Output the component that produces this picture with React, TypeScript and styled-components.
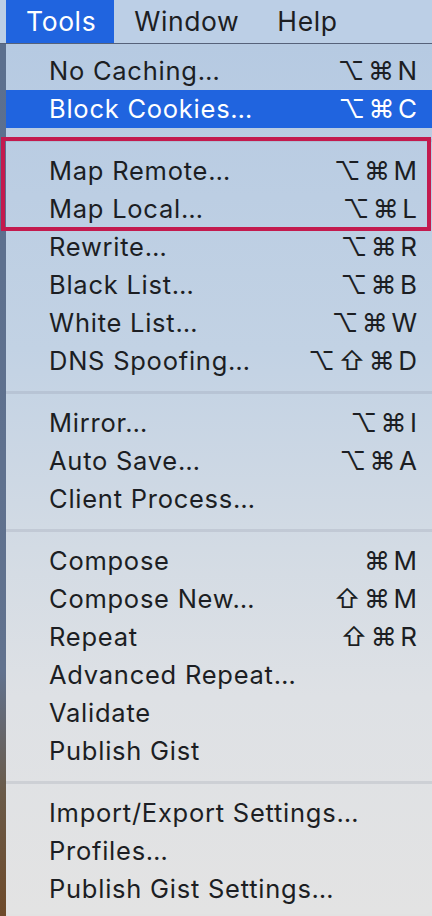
import React from 'react';
import styled, { createGlobalStyle } from 'styled-components';

type Entry =
  | { kind: 'item'; label: string; keys?: string; active?: boolean }
  | { kind: 'sep' }
  | { kind: 'group'; items: { label: string; keys?: string }[] };

const entries: Entry[] = [
  { kind: 'item', label: 'No Caching…', keys: '⌥⌘N' },
  { kind: 'item', label: 'Block Cookies…', keys: '⌥⌘C', active: true },
  { kind: 'sep' },
  {
    kind: 'group',
    items: [
      { label: 'Map Remote…', keys: '⌥⌘M' },
      { label: 'Map Local…', keys: '⌥⌘L' },
    ],
  },
  { kind: 'item', label: 'Rewrite…', keys: '⌥⌘R' },
  { kind: 'item', label: 'Black List…', keys: '⌥⌘B' },
  { kind: 'item', label: 'White List…', keys: '⌥⌘W' },
  { kind: 'item', label: 'DNS Spoofing…', keys: '⌥⇧⌘D' },
  { kind: 'sep' },
  { kind: 'item', label: 'Mirror…', keys: '⌥⌘I' },
  { kind: 'item', label: 'Auto Save…', keys: '⌥⌘A' },
  { kind: 'item', label: 'Client Process…' },
  { kind: 'sep' },
  { kind: 'item', label: 'Compose', keys: '⌘M' },
  { kind: 'item', label: 'Compose New…', keys: '⇧⌘M' },
  { kind: 'item', label: 'Repeat', keys: '⇧⌘R' },
  { kind: 'item', label: 'Advanced Repeat…' },
  { kind: 'item', label: 'Validate' },
  { kind: 'item', label: 'Publish Gist' },
  { kind: 'sep' },
  { kind: 'item', label: 'Import/Export Settings…' },
  { kind: 'item', label: 'Profiles…' },
  { kind: 'item', label: 'Publish Gist Settings…' },
];

const App: React.FC = () => {
  return (
    <>
      <GlobalStyle />
      <Screen>
        <MenuBar>
          <BarItem open>Tools</BarItem>
          <BarItem>Window</BarItem>
          <BarItem>Help</BarItem>
        </MenuBar>

        <Body>
          <Desktop />
          <Menu>
            {entries.map((entry, i) => {
              if (entry.kind === 'sep') {
                return <Separator key={i} />;
              }
              if (entry.kind === 'group') {
                return (
                  <Marked key={i}>
                    {entry.items.map((item) => (
                      <Row key={item.label}>
                        <Label>{item.label}</Label>
                        {item.keys && <Keys>{item.keys}</Keys>}
                      </Row>
                    ))}
                  </Marked>
                );
              }
              return (
                <Row key={i} active={entry.active}>
                  <Label>{entry.label}</Label>
                  {entry.keys && <Keys>{entry.keys}</Keys>}
                </Row>
              );
            })}
          </Menu>
        </Body>
      </Screen>
    </>
  );
};

export default App;

const GlobalStyle = createGlobalStyle`
  html, body {
    margin: 0;
    padding: 0;
    background: #e2e2e2;
  }
  * {
    box-sizing: border-box;
  }
`;

const Screen = styled.div`
  width: 432px;
  height: 916px;
  overflow: hidden;
  display: flex;
  flex-direction: column;
  font-family: Inter, 'DejaVu Sans', sans-serif;
  color: #1c1e23;
  background: #e2e2e2;
`;

const MenuBar = styled.div`
  height: 44px;
  flex-shrink: 0;
  display: flex;
  align-items: stretch;
  padding-left: 6px;
  background: #bccfe6;
  border-bottom: 1px solid #56627a;
`;

const BarItem = styled.div<{ open?: boolean }>`
  display: flex;
  align-items: center;
  padding: 0 18px 2px 20px;
  font-size: 26.5px;
  letter-spacing: 0.6px;
  color: ${(props) => (props.open ? '#ffffff' : '#1c1e23')};
  background: ${(props) => (props.open ? '#2064df' : 'transparent')};
`;

const Body = styled.div`
  flex: 1;
  display: flex;
`;

const Desktop = styled.div`
  width: 6px;
  flex-shrink: 0;
  background: linear-gradient(180deg, #5b6f8e 0%, #61728e 72%, #6a5a48 86%, #6e4a2a 100%);
`;

const Menu = styled.div`
  flex: 1;
  height: 870px;
  padding: 8px 0 6px;
  border-bottom-left-radius: 7px;
  border-bottom-right-radius: 7px;
  background: linear-gradient(180deg, #b6cae2 0%, #c2d2e4 35%, #d3dbe4 58%, #dee1e5 75%, #e3e3e3 100%);
`;

const Row = styled.div<{ active?: boolean }>`
  height: 38px;
  display: flex;
  align-items: center;
  justify-content: space-between;
  padding: 0 15px 1px 43px;
  font-size: 25.5px;
  color: ${(props) => (props.active ? '#ffffff' : '#1c1e23')};
  background: ${(props) => (props.active ? '#2064df' : 'transparent')};
`;

const Label = styled.span`
  white-space: nowrap;
  letter-spacing: 0.75px;
`;

const Keys = styled.span`
  font-family: Inter, 'DejaVu Sans', sans-serif;
  font-size: 26px;
  letter-spacing: 3.5px;
  margin-right: -3.5px;
  white-space: nowrap;
`;

const Separator = styled.div`
  height: 24px;
  display: flex;
  align-items: center;

  &::after {
    content: '';
    flex: 1;
    height: 3px;
    background: rgba(120, 130, 145, 0.18);
  }
`;

const Marked = styled.div`
  position: relative;

  &::after {
    content: '';
    position: absolute;
    top: -15px;
    bottom: -3px;
    left: -5px;
    right: 1px;
    border: 4px solid #c31a4e;
    pointer-events: none;
  }
`;
